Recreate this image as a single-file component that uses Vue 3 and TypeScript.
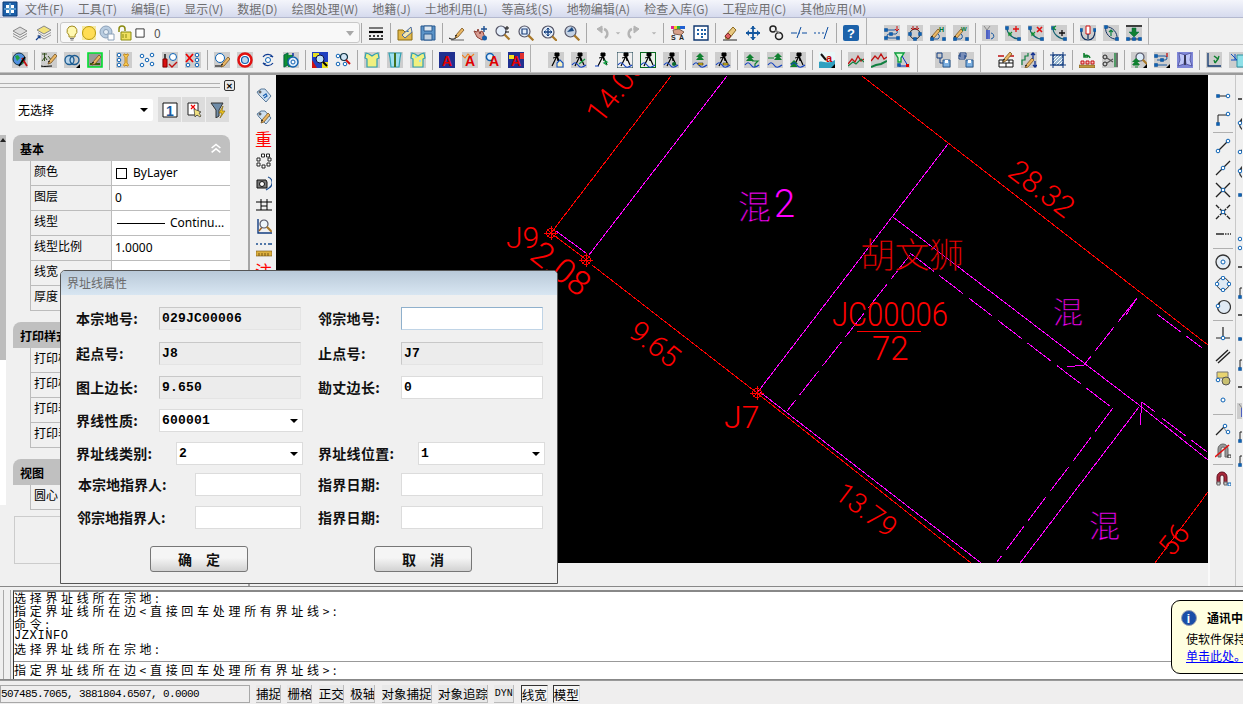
<script setup lang="ts">
import { h } from 'vue'

type Shape = { d?: string; f?: string; s?: string; w?: number; t?: string; x?: number; y?: number; z?: number }
const P = (d: string, f = 'none', s = '#000', w = 1): Shape => ({ d, f, s, w })
const T = (t: string, x: number, y: number, z: number, f = '#000'): Shape => ({ t, x, y, z, f })
const circ = (x: number, y: number, r: number) => `M${x - r} ${y}a${r} ${r} 0 1 0 ${2 * r} 0a${r} ${r} 0 1 0 ${-2 * r} 0`
const tile = P('M0 0h16v16H0z', '#cdcdcd', 'none', 0)
const N = (x: number, y: number, r = 1.8, s = '#0b62b5') => P(circ(x, y, r), '#fff', s, 1)
const Q = (x: number, y: number) => P(`M${x - 1.5} ${y - 1.5}h3v3h-3z`, '#0b62b5', '#0b4a90', 0.5)
const pen = (x: number, y: number) => [P(`M${x} ${y}l6-7 2 2-6 7-3 1z`, '#eab765', '#6a4510', 0.7), P(`M${x} ${y}l-1 1 2 0z`, '#222', '#222', 0.5)]
const lens = (x: number, y: number, r: number, fill = '#e4eefa') => [P(circ(x, y, r), fill, '#556', 1.2), P(`M${x + r * 0.7} ${y + r * 0.7}l5 5`, 'none', '#a8782a', 2.2)]
const tri = [P('M7 1h4v3H7z', '#000', '#000'), P('M9 4 4 14M9 4l1 5M9 4l4 9', 'none', '#000', 1.2), P('M5 6l4-1', 'none', '#000', 1)]
const wave = P('M1 13c2-3 4-3 6 0s4 3 8 0', 'none', '#1040c0', 1.2)
const tree = (x: number, y: number, c = '#108030') => P(`M${x} ${y}l-4 4h2.5l-2.5 3h8l-2.5-3h2.5z`, c, 'none', 0)
const redA = (bg: string) => [P('M0 0h16v16H0z', bg, 'none', 0), T('A', 3, 14, 14, '#e00000')]

const icons: Record<string, Shape[]> = {
  logo: [P('M1 1h14v14H1z', '#1c5fa8', '#0c3c78'), P('M4 4h3v3H4zM9 4h3v3H9zM4 9h3v3H4zM9 9h3v3H9z', '#fff', 'none', 0), P('M8 2v12M2 8h12', 'none', '#8fd0f0', 1)],
  layers: [P('M8 2 15 6 8 10 1 6Z', '#dcdcdc', '#888'), P('M1 8.5l7 4 7-4', 'none', '#888'), P('M1 11l7 4 7-4', 'none', '#999')],
  layers2: [P('M9 1 16 5 9 9 2 5Z', '#f2e27a', '#888'), P('M3 7.5l6 4 7-4M3 10l6 4 7-4', 'none', '#999'), P('M1 15l4-4M2.5 11H5v2.5', 'none', '#14408c', 1.2)],
  bulb: [P('M8 1a5 5 0 0 0-3 9v2h6v-2a5 5 0 0 0-3-9z', '#fff8b0', '#a08a20'), P('M6 13.5h4M6.5 15h3', 'none', '#777')],
  sun: [P('M1 1h14v14H1z', '#f6e9a0', 'none', 0), P(circ(8, 8, 6.5), '#ffdd55', '#b89a10')],
  gear: [P(circ(7, 7, 6), '#b8cce0', '#8aa0b8'), P(circ(7, 7, 2.5), '#e6eef6', '#8aa0b8'), P('M9 9h6v6H9z', '#fff', '#8aa0b8')],
  lock: [P('M3 7V4a3 3 0 0 1 6 0v2', 'none', '#8a8a10', 1.5), P('M5 7h10v8H5z', '#f0e060', '#8a8a10'), P('M7 9v4M10 9v4', 'none', '#8a8a10')],
  blk: [P('M2.5 2.5h11v11h-11z', '#fff', '#000')],
  lines: [P('M1 3h14', 'none', '#000', 1), P('M1 7h14', 'none', '#000', 2.2), P('M1 11h2M5 11h2M9 11h2M13 11h2M1 14h14', 'none', '#000', 1.4)],
  folder: [P('M1 5h5l2 2h7v8H1z', '#e2b84a', '#8a6a10'), P('M5 10 14 2l1 5-7 6z', '#f4e8b0', '#4a6aa0'), P('M9 7l2-2 1 2z', '#3a70b0', 'none', 0)],
  save: [P('M1 1h14v14H1z', '#5b93c7', '#2a5a90'), P('M4 1h8v5H4z', '#dfe8f0', '#2a5a90'), P('M4 9h8v6H4z', '#c0d0e0', '#2a5a90')],
  pline: [P('M0 13c3 2 6 1 8-1', 'none', '#000'), P('M2 15h13', 'none', '#000', 0.6), ...pen(7, 10)],
  hand: [P('M2 6l3 6 5 3 3-2-2-6-2-1-1 3-2-5-1 3z', '#d99c92', '#8c4036'), P('M12 1v6M9 4h6', 'none', '#1c4f90', 1.4), P(circ(12.5, 13, 2.5), '#1c5fa8', 'none', 0)],
  zplus: [...lens(6, 6, 5), P('M12 1v4M10 3h4M10 7h4', 'none', '#111')],
  zwin: [...lens(6.5, 6.5, 5.5), P('M4 4h5v5H4z', 'none', '#1c3f78', 1.2)],
  zpan: [...lens(7, 7, 6), P('M7 3v8M3 7h8', 'none', '#123f80', 1.3), P('M5.5 4.5 7 3l1.5 1.5M5.5 9.5 7 11l1.5-1.5M4.5 5.5 3 7l1.5 1.5M9.5 5.5 11 7 9.5 8.5', 'none', '#123f80')],
  zprev: [...lens(6.5, 6.5, 5.5, '#c4d2e4'), P('M3 7 8 2l2 4z', '#1d4a80', 'none', 0)],
  undo: [P('M11 4a5 5 0 0 1 1 9', 'none', '#b4b4b4', 2.4), P('M10 4H4m0 0 5-3v7z', '#b4b4b4', '#b4b4b4')],
  redo: [P('M5 4a5 5 0 0 0-1 9', 'none', '#b4b4b4', 2.4), P('M6 4h6m0 0-5-3v7z', '#b4b4b4', '#b4b4b4')],
  dd: [P('M5 7h6l-3 3z', '#b4b4b4', 'none', 0)],
  color: [P('M1 1h3v3H1z', '#e02090', 'none', 0), P('M4 1h3v3H4z', '#f0d020', 'none', 0), P('M7 1h3v3H7z', '#20b040', 'none', 0), P('M10 1h5v3h-5z', '#2060d0', 'none', 0), P('M3 5l6-1 5 3-3 3-7-1z', '#d8a088', '#806050'), T('S', 1, 15, 7, '#222'), T('A', 9, 15, 7, '#222')],
  dgrid: [P('M1 1h14v14H1z', '#fff', '#103870', 1.4), P('M4 4h2v2H4zM8 4h2v2H8zM11 4h2v2h-2zM4 8h2v2H4zM8 8h2v2H8zM11 8h2v2h-2zM8 11h2v2H8z', '#1c60a8', 'none', 0)],
  eraser: [P('M1 15h14', 'none', '#222'), P('M3 11 11 2l3 3-7 9H4z', '#e8c880', '#8a6a20'), P('M3 11l3 3 3-3-3-3z', '#e06060', '#803030')],
  move: [P('M8 1v14M1 8h14', 'none', '#1558a0', 1.8), P('M5 4l3-3 3 3zM5 12l3 3 3-3zM4 5 1 8l3 3zM12 5l3 3-3 3z', '#1558a0', 'none', 0)],
  link: [P(circ(5, 4, 3), 'none', '#222', 1.5), P(circ(11, 11, 3.5), 'none', '#222', 1.5), P('M7 6c3 0 4 1 4 3', 'none', '#888', 1.5)],
  br1: [P('M0 8h6M11 8h5', 'none', '#0a4ca0', 1), P('M6 13 10 2', 'none', '#0a4ca0', 1), P('M8 8h1', 'none', '#0a4ca0', 1)],
  br2: [P('M0 8h2M4 8h2M8 8h2', 'none', '#0a4ca0', 1), P('M10 14 14 2', 'none', '#0a4ca0', 1)],
  help: [P('M2 0h12a2 2 0 0 1 2 2v12a2 2 0 0 1-2 2H2a2 2 0 0 1-2-2V2a2 2 0 0 1 2-2z', '#1c62aa', 'none', 0), T('?', 4, 13, 13, '#fff')],
  t1: [tile, P('M2 5h8a2 2 0 0 1 2 4H5a2 2 0 0 0 0 4h8', 'none', '#1858a0'), Q(2, 5), Q(7, 9), Q(2, 13), Q(14, 13), P('M13 1v5M11 4l2 2 2-2', 'none', '#d01010')],
  t2: [tile, P(circ(8, 9, 5), 'none', '#222'), Q(3, 9), Q(13, 9), Q(8, 14), P('M6 1v3M4 3l2 2 2-2M10 1v3M8 3l2 2 2-2', 'none', '#b01010')],
  t3: [tile, ...pen(2, 11), T('H', 9, 7, 7, '#073'), P('M8 9a3 3 0 0 1 0 5H3', 'none', '#1858a0'), Q(2, 14), Q(14, 14)],
  t4: [tile, ...pen(2, 11), T('W', 8, 6, 6, '#073'), P('M8 9a3 3 0 0 1 0 5H3', 'none', '#1858a0'), Q(2, 14), Q(14, 14)],
  t5: [tile, P('M2 1l3 4M8 1 5 5M5 5v9', 'none', '#888'), P('M5 5v9M7 5v9', 'none', '#1030d0', 1.2), P('M9 8a3 3 0 0 1 2 5l-2 1', 'none', '#1858a0')],
  t6: [tile, P('M2 3c0 6 6 11 12 11', 'none', '#106070', 1.2), Q(2, 3), Q(14, 14), P('M11 1v6M8 4h6', 'none', '#e01010', 1.3), P('M7 7 4 10v-3M4 10h3', 'none', '#109030', 1.2)],
  t7: [tile, P('M2 3c0 6 6 11 12 11', 'none', '#106070', 1.2), Q(2, 3), Q(14, 14), P('M9 2l5 5M14 2 9 7', 'none', '#e01010', 1.6), P('M7 7 4 10v-3M4 10h3', 'none', '#109030', 1.2)],
  t8: [tile, P('M2 3c0 6 6 11 12 11', 'none', '#106070', 1.2), Q(2, 3), Q(14, 14), P('M11 5v6M8 8h6', 'none', '#111', 1.3), P('M5 1 2 3l3 2', 'none', '#109030', 1.2)],
  t9: [tile, P('M1 5c0 7 3 10 7 10s7-3 7-10', 'none', '#103060', 1.1), P('M6 1h4v8H6z', '#fff', '#d01010'), P('M8 9v5', 'none', '#103060', 1.2), Q(1, 5), Q(15, 5)],
  t10: [tile, P('M3 2c-2 6 5 13 11 12', 'none', '#103060'), P('M3 2c6-1 12 6 11 12', 'none', '#103060'), Q(3, 2), Q(14, 14), P('M8 5v6M6 7l2-2 2 2', 'none', '#108040', 1.2)],
  t11: [tile, P('M0 1h16', 'none', '#000', 1.4), P('M6 3h4v4h3l-5 5-5-5h3z', '#108030', '#064', 0.5), P('M1 14h14', 'none', '#123', 1), Q(2, 14), Q(8, 14), Q(14, 14)],
  globe: [tile, P(circ(7, 7, 6), '#5090e0', '#134'), P('M3 4l3-1 2 3-3 3zM9 8l3 0-1 4-2-1z', '#20a040', 'none', 0), P('M10 6 15 14', 'none', '#c01010', 1.8), P('M13 5l-6 9', 'none', '#000', 1.6)],
  pencz: [tile, P('M1 2h5M3.5 1v8M1 9l3-4 2 3M7 4l4 5', 'none', '#355020'), ...pen(8, 9), P('M0 14c3 1 7 0 11 0', 'none', '#000')],
  rings: [tile, P(circ(5.5, 8, 4.5), '#b8d4ea', '#1a5a90', 1.3), P(circ(10.5, 8, 4.5), 'none', '#1a5a90', 1.3), P('M16 16h-4l4-4z', '#000', 'none', 0)],
  gbox: [P('M1 1h14v14H1z', '#9a9a9a', '#00e030', 1.6), P('M3 11h10v2H3z', '#3a5a10', 'none', 0), ...pen(6, 10)],
  nbone: [tile, N(3, 3), N(3, 8), N(3, 13), P('M8 2c-1 1 0 2 1 3v6c-1 1-2 2-1 3h1l1-1 1 1h1c1-1 0-2-1-3V5c1-1 2-2 1-3h-1l-1 1-1-1z', '#f6c850', '#c08820')],
  n4: [N(3, 4), N(13, 3), N(3, 13), N(13, 12), N(8, 8)],
  nfix: [tile, N(11, 5, 3.5), P('M3 2v5', 'none', '#222', 1.6), P('M1 7h4v8H1z', '#d81010', '#800'), P('M7 12l3 3 5-5', 'none', '#c01010', 1.4)],
  nx: [tile, P('M1 2l7 8M8 2l-7 8', 'none', '#e00', 1.8), N(12, 3), N(12, 8), N(3, 13), N(12, 13)],
  rpen: [tile, N(6, 6, 4.5), P('M1 14h7', 'none', '#000', 1), ...pen(8, 12)],
  rring: [tile, P(circ(8, 8, 6.5), '#fff', '#e01010', 2.5), P(circ(8, 8, 3.5), '#bcd8f0', '#1060b0', 1.2)],
  cyc: [N(8, 8, 2.5), P('M3 5a6 6 0 0 1 10 0M13 11a6 6 0 0 1-10 0', 'none', '#103c90', 1.2), P('M13 5l-3-1M3 11l3 1', 'none', '#103c90', 1.2)],
  grg: [tile, P('M1 3l4-2v12l-4 2z', '#109030', '#064'), P('M5 3h5v12H5z', '#109030', 'none', 0), P(circ(10, 10, 5), '#dcecfa', '#1060b0', 1.4), P(circ(10, 10, 2), '#fff', '#1060b0'), P('M10 1v3', 'none', '#1030a0', 1.5)],
  mapz: [P('M0 0h16v16H0z', '#2040c0', 'none', 0), P('M1 1h6v4H1zM10 10h6v6h-6z', '#e8e020', 'none', 0), P('M0 8l5 8H0z', '#d01010', 'none', 0), P(circ(8, 7, 4), '#bfe0f5', '#114'), P('M11 10l4 4', 'none', '#000', 2)],
  nz: [N(3, 4), N(3, 12), N(10, 12), P(circ(9, 5, 3.5), '#d0e4f4', '#134', 1.2), P('M11 8l4 4', 'none', '#d01010', 2)],
  sh1: [tile, P('M2 1l3 1 3 2 3-2 3-1 1 5-2 1v8H3V7L1 6z', '#f0f080', '#30a0b0', 1.2)],
  sh2: [tile, P('M2 1h12l-1 5-1 9H4L3 6z', '#a0e0f0', '#30a0b0', 1.2), P('M7 1h2v14H7z', '#407020', 'none', 0)],
  sh3: [tile, P('M2 1l3 1 3 2 3-2 3-1 1 5-2 1v8H3V7L1 6z', '#f0f080', '#30a0b0', 1.2), P('M5 4h2v2H5zM9 8h2v2H9z', '#a0e0f0', 'none', 0)],
  a1: redA('#203090'),
  a2: [tile, P('M0 3l3 3 3-4 3 3 3-3', 'none', '#f08020', 1.1), T('A', 3, 14, 14, '#e00000')],
  a3: [tile, P(circ(5, 5, 3.6), '#e0f0ff', '#1060b0', 1.5), T('A', 4, 14, 14, '#e00000')],
  a4: [P('M0 0h16v16H0z', '#203090', 'none', 0), P('M1 3h5v4H1z', '#f0e020', 'none', 0), P('M12 1h4v6h-4z', '#e03030', 'none', 0), T('A', 3, 14, 14, '#e00000')],
  s1: [tile, ...tri, P('M9 11l3-3 3 3v4H9z', '#f8f0c0', '#1050c0', 1.1)],
  s2: [tile, ...tri, wave, P('M8 12l6-5', 'none', '#10a040', 1.2)],
  s3: [...tri, P('M10 8l3 2-3 1 3 2', 'none', '#10a040', 1.3), P('M1 14h4', 'none', '#1040c0')],
  s4: [P('M0 0h16v16H0z', 'none', '#103848', 1), ...tri, wave],
  s5: [P('M0 0h16v16H0z', '#e8f0e8', '#0a6a20', 2), ...tri, wave],
  s6: [tile, ...tri, wave, P(circ(11, 12, 2), '#0a6a30', 'none', 0)],
  s7: [tile, tree(8, 1), wave, P('M6 11h5v2H6z', '#e8c820', '#000', 0.5)],
  s8: [tile, ...tri, wave, P('M8 11h5v2H8z', '#e8c820', '#000', 0.5)],
  s9: [tile, tree(6, 2), P('M8 9h6l-3 3v3', 'none', '#108030', 1.2), wave],
  s10: [tile, tree(11, 1), wave, P('M1 6h6', 'none', '#108030', 1)],
  s11: [tile, ...tri, tree(4, 8), wave],
  amap: [P('M0 0h16v16H0z', '#e8f8f8', 'none', 0), P('M0 10c4-2 8 3 16-2v8H0z', '#30a0c0', 'none', 0), P('M2 2l5 6', 'none', '#111', 2), T('a', 7, 10, 11, '#c00000'), P('M16 16h-4l4-4z', '#000', 'none', 0)],
  zig1: [tile, P('M0 12l4-5 3 3 3-6 3 5 3-2', 'none', '#c01010', 1.3), P('M0 14l5-4 3 2 5-5 3 3', 'none', '#108040', 1.2)],
  zig2: [tile, P('M0 9l4-5 3 3 3-5 3 5 3-2', 'none', '#c01010', 1.3), P('M0 15l5-2 5-1 6-3', 'none', '#108040', 2)],
  funn: [tile, P('M1 1h9L7 6v4H4V6z', '#d0ffd0', '#10a040', 1.4), P('M8 4l6 10H5', 'none', '#1030c0'), Q(5, 13), P('M12 12h3v3h-3z', '#e00000', 'none', 0)],
  f1: [tile, P('M2 1h5v5H2z', 'none', '#123c80'), P('M5 6v5h3', 'none', '#123c80'), P('M8 8h7v7H8z', '#7db0e0', '#2a5a90'), P('M10 8h3v3h-3z', '#fff', 'none', 0)],
  f2: [tile, P('M2 1h6v4H2zM1 3h6v4H1z', '#dde', '#123c80'), P('M8 8h7v7H8z', '#7db0e0', '#2a5a90'), P('M10 8h3v3h-3z', '#fff', 'none', 0)],
  brick: [P('M1 8h14v7H1z', '#fff', '#111'), P('M1 11h14M5 8v3M11 8v3M8 11v4', 'none', '#111'), P('M0 4h6M10 4h6', 'none', '#c01010', 1.5), ...pen(6, 7)],
  parrows: [tile, P('M1 13V8h3V4h3V1', 'none', '#108040', 1.2), ...pen(5, 13), P('M12 1v6M10 3l2-2 2 2', 'none', '#103090', 1.3), P('M14 9v6M12 13l2 2 2-2', 'none', '#103090', 1.3)],
  hatch: [P('M3 3h10v10H3z', '#9ab8d0', '#123c80'), P('M3 6l3-3M3 9l6-6M3 12l9-9M6 13l7-7M9 13l4-4', 'none', '#fff'), P('M0 3h16M0 13h16M3 0v16M13 0v16', 'none', '#123c80')],
  garr: [P('M2 9h3v3H2zM7 9h3v3H7zM12 9h3v3h-3z', '#fbb', '#c01010'), P('M0 13h16v3H0z', '#c09a40', '#604010', 0.5), P('M11 6a4 4 0 0 0-6-2M5 1v4h4', 'none', '#108030', 1.6)],
  sciss: [tile, P(circ(3, 5, 2), 'none', '#222'), P(circ(3, 12, 2), 'none', '#222'), P('M5 6l6 4M5 11l6-4', 'none', '#555', 1.2), P('M13 1v14', 'none', '#108030', 1.3), P('M15 1v14', 'none', '#111', 1)],
  ztree: [tile, ...lens(9, 5, 4, '#dcecf8'), tree(5, 6), P('M2 13h6M4 15h3', 'none', '#108030'), P('M16 16h-4l4-4z', '#000', 'none', 0)],
  ntree: [tile, P('M2 4h9a2 2 0 0 1 0 4H3', 'none', '#1858a0'), Q(2, 4), Q(8, 8), P('M13 1v4', 'none', '#c01010', 1.3), P('M1 13h12', 'none', '#1858a0'), Q(2, 13), P('M16 16h-4l4-4z', '#000', 'none', 0)],
  bfly: [P('M0 0h16v16H0z', '#8088d8', 'none', 0), P('M8 3 2 1 3 8l-2 6 6-2zM8 3l6-2-1 7 2 6-6-2z', '#c0c8f8', '#404090', 0.7), P('M8 3v10', 'none', '#223', 1.4)],
  axes: [tile, P('M2 1v13h13', 'none', '#103870', 1.3), P('M8 4l4 3-3 4', 'none', '#108030', 1.5), P('M9 11l-1-3M12 7l1-3', 'none', '#108030', 1.3)],
  cube: [tile, P('M8 3h7v12H8z', '#8fe0e8', '#3090a0'), P('M2 2l6 6M2 8h6M6 2v6', 'none', '#1050c0')],
  v1: [P('M1 5 5 2h4l6 7-5 6-7-7z', '#cfe0f0', '#5a7a9a'), P('M7 9l3-2 1 2-3 2', 'none', '#1a60b0', 1.2), P(circ(4, 5, 1), '#fff', '#333')],
  v2: [P('M1 5 5 2h4l6 7-5 6-7-7z', '#cfe0f0', '#5a7a9a'), ...pen(6, 11), P(circ(4, 5, 1), '#fff', '#333')],
  dots: [P('M1 5h3v3H1zM5.5 1h3v3h-3zM10.5 1h3v3h-3zM12 5h3v3h-3zM1 10h3v3H1zM6 12h3v3H6zM11 10h3v3h-3z', '#fff', '#222')],
  cam: [P('M1 5h9l1 2v6H1z', '#7a7a7a', '#111'), P(circ(6, 9, 2.5), '#fff', '#111'), P('M12 2a6 6 0 0 1 1 11l-3 2', 'none', '#1d4f90', 1.2)],
  ruler: [P('M0 5h16M5 2v11M11 2v11M5 9h6M0 13h16', 'none', '#000')],
  axz: [P('M2 0v14h14', 'none', '#123c80', 1.4), P('M3 12l4-5', 'none', '#a06020', 1.4), ...lens(8, 5, 4, '#eef4fa')],
  tape: [P('M0 3h2M4 3h2M8 3h2M12 3h4', 'none', '#1d4f90', 1.6), P('M0 10h16v5H0z', '#dcb040', '#775510', 0.6), P('M3 12v3M6 12v3M9 12v3M12 12v3', 'none', '#775510')],
  x1: [P('M3 8h10', 'none', '#222'), Q(3, 8), N(13, 8)],
  x2: [P('M3 14V5h10', 'none', '#222'), Q(3, 14), N(13, 4)],
  x3: [P('M3 13 13 3', 'none', '#222', 1.2), N(3, 13), N(13, 3)],
  x4: [P('M1 15 15 1', 'none', '#222', 1.2), N(8, 8)],
  x5: [P('M1 1l14 14M15 1 1 15', 'none', '#222', 1.4), N(8, 8)],
  x6: [P('M1 1l14 14M15 1 1 15', 'none', '#222', 1.4), P('M4 4l1 1M11 4l1 1M4 12l1-1M11 12l1-1', 'none', '#f0f0f0', 1.4), N(8, 8)],
  x7: [P('M1 8h8', 'none', '#333', 1.6), P('M10 8h1.5M12.5 8h1.5M15 8h1', 'none', '#333', 1.4)],
  x8: [P(circ(8, 8, 7), '#e4ecf4', '#333', 1.3), N(8, 8, 2)],
  x9: [P(circ(8, 8, 6), '#e0eaf4', '#333'), N(8, 2), N(8, 14), N(2, 8), N(14, 8)],
  x10: [P(circ(9, 9, 6.5), '#e0eaf4', '#333', 1.2), N(3, 8), P('M5 4 4 7', 'none', '#333')],
  x11: [P('M8 1v11M1 12h14', 'none', '#222', 1.2), N(8, 12)],
  x12: [P('M1 13 13 2M3 15 15 4', 'none', '#222', 1.4)],
  x13: [P('M2 2h11v6H2z', '#e8d470', '#777'), P(circ(11, 11, 4), '#c9c070', '#555'), N(3, 10)],
  x14: [N(8, 8, 2)],
  x15: [P('M1 15l8-8', 'none', '#222', 1.2), N(10, 6), N(13, 12), P('M9 8l2 3', 'none', '#888')],
  x16: [P('M3 15V7a5 5 0 0 1 10 0v8h-3V7a2 2 0 0 0-4 0v8z', '#999', '#666'), P('M0 15 14 3', 'none', '#e01010', 1.6), P('M13 13h3v3h-3z', '#fff', '#333')],
  x17: [P('M2 14V7a5 5 0 0 1 10 0v7H9V7a2 2 0 0 0-4 0v7z', '#a8283a', '#601020'), P('M2 12h3v3H2zM9 12h3v3H9z', '#ccc', '#666'), P('M13 13h3v3h-3z', '#fff', '#0b62b5')],
  info: [P(circ(8, 8, 7.5), '#1a4ea8', '#9aa0b0', 1), T('i', 5.8, 13, 12, '#fff')],
  btn1: [P('M1 1h14v14H1z', '#fff', '#111'), T('1', 4, 14, 14, '#1a5a9c')],
  btn2: [P('M2 1h10v12H2z', '#fff', '#222'), P('M5 3l4 4M9 3 5 7', 'none', '#e00', 1.2), P('M8 7l1 8 2-2 3 2 1-1-2-3 2-1z', '#f0e080', '#333', 0.7)],
  btn3: [P('M1 1h12L9 8v6l-3 2V8z', '#6f8ca8', '#333'), P('M13 4 9 11h3l-2 5 5-7h-3z', '#f0c820', '#806000', 0.6)],
  chev: [P('M3 8l5-4 5 4M3 13l5-4 5 4', 'none', '#fff', 1.8)],
}

const Ico = (p: { k: string; z?: number }) =>
  h('svg', { class: 'ico', width: p.z ?? 16, height: p.z ?? 16, viewBox: '0 0 16 16' },
    (icons[p.k] ?? []).map((s) =>
      s.t
        ? h('text', { x: s.x, y: s.y, fill: s.f, 'font-size': s.z, 'font-weight': 700, 'font-family': '"Liberation Sans",sans-serif' }, s.t)
        : h('path', { d: s.d, fill: s.f, stroke: s.s, 'stroke-width': s.w }),
    ),
  )

const menus = ['文件(F)', '工具(T)', '编辑(E)', '显示(V)', '数据(D)', '绘图处理(W)', '地籍(J)', '土地利用(L)', '等高线(S)', '地物编辑(A)', '检查入库(G)', '工程应用(C)', '其他应用(M)']

const bar1: string[][] = [
  ['layers', 'layers2', '|', 'COMBO', '|', 'lines', '|', 'folder', 'save', '|', 'pline', 'hand', 'zplus', 'zwin', 'zpan', 'zprev', '|', 'undo', 'dd', 'redo', 'dd2', '|', 'color', 'dgrid', '|', 'eraser', 'move', 'link', 'br1', 'br2', '|', 'help'],
  ['t1', 't2', 't3', 't4', '|', 't5', 't6', 't7', 't8', '|', 't9', 't10', 't11'],
]
const bar2: string[][] = [
  ['globe', '|', 'pencz', 'rings', 'gbox', '|', 'nbone', 'n4', 'nfix', 'nx', '|', 'rpen', 'rring', 'cyc', 'grg', '|', 'mapz', 'nz', '|', 'sh1', 'sh2', 'sh3', '|', 'a1', 'a2', 'a3', 'a4'],
  ['s1', 's2', 's3', 's4', 's5', 's6', '|', 's7', 's8', '|', 's9', 's10', 's11', '|', 'amap', '|', 'zig1', 'zig2', 'funn'],
  ['f1', 'f2'],
  ['brick', 'parrows', '|', 'hatch', '|', 'garr', 'sciss', '|', 'ztree', 'ntree', 'bfly', '|', 'axes', 'cube'],
]

const leftTools = [
  { k: 'v1' }, { k: 'v2' }, { t: '重' }, { k: 'dots' }, { k: 'cam' }, { k: 'ruler' }, { k: 'axz' }, { k: 'tape' }, { t: '注' },
]

const rightTools = ['x1', 'x2', '|', 'x3', 'x4', 'x5', 'x6', 'x7', '|', 'x8', 'x9', 'x10', '|', 'x11', 'x12', 'x13', 'x14', '|', 'x15', 'x16', '|', 'x17']
const rightTools2 = ['x7', 'x10', 'x3', 'x10', 'x1', 'x14', 'n4', 'x7', 'x2', 'x7', 'x1', 'x2', 'x7', 't5', 'x2', 'x2']

const sections = [
  {
    title: '基本',
    rows: [
      { k: '颜色', v: 'ByLayer', kind: 'color' },
      { k: '图层', v: '0' },
      { k: '线型', v: 'Continu...', kind: 'line' },
      { k: '线型比例', v: '1.0000' },
      { k: '线宽', v: '' },
      { k: '厚度', v: '' },
    ],
  },
  {
    title: '打印样式',
    rows: [
      { k: '打印样式', v: '' },
      { k: '打印样式表', v: '' },
      { k: '打印表附着到', v: '' },
      { k: '打印表类型', v: '' },
    ],
  },
  { title: '视图', rows: [{ k: '圆心 X', v: '' }] },
]

type Cell = { label: string; cls: string; val: string; kind: 'ro' | 'ed' | 'act' | 'cb' }
const rows: { l: Cell; r?: Cell }[] = [
  { l: { label: '本宗地号:', cls: 'w83', val: '029JC00006', kind: 'ro' }, r: { label: '邻宗地号:', cls: 'w83', val: '', kind: 'act' } },
  { l: { label: '起点号:', cls: 'w83', val: 'J8', kind: 'ro' }, r: { label: '止点号:', cls: 'w83', val: 'J7', kind: 'ro' } },
  { l: { label: '图上边长:', cls: 'w83', val: '9.650', kind: 'ro' }, r: { label: '勘丈边长:', cls: 'w83', val: '0', kind: 'ed' } },
  { l: { label: '界线性质:', cls: 'w83', val: '600001', kind: 'cb' } },
  { l: { label: '界址线类别:', cls: 'w100', val: '2', kind: 'cb' }, r: { label: '界址线位置:', cls: 'w100', val: '1', kind: 'cb' } },
  { l: { label: '本宗地指界人:', cls: 'w119 ind', val: '', kind: 'ed' }, r: { label: '指界日期:', cls: 'w83', val: '', kind: 'ed' } },
  { l: { label: '邻宗地指界人:', cls: 'w119 ind2', val: '', kind: 'ed' }, r: { label: '指界日期:', cls: 'w83', val: '', kind: 'ed' } },
]

const statusBtns = [
  { t: '捕捉', c: 'b2' }, { t: '栅格', c: 'b2' }, { t: '正交', c: 'b2' }, { t: '极轴', c: 'b2' },
  { t: '对象捕捉', c: 'b4' }, { t: '对象追踪', c: 'b4' }, { t: 'DYN', c: 'dyn' }, { t: '线宽', c: 'b2 on' }, { t: '模型', c: 'b2 on' },
]

const redLines = [
  'M551 233 671 76', 'M862 76 1208 345', 'M555 236 583 257', 'M592 265 757 393', 'M757 393 971 563', 'M1208 492 1155 563',
]
const magLines = [
  'M589 255 727 76', 'M556 231 586 253', 'M757 393 948 144', 'M893 217 1139 405 1208 460', 'M760 392 981 563', 'M1139 407 1020 563',
  'M1067 367 1084 365', 'M1142 402 1155 412', 'M1142 402 1140 425',
]
const magDash = [
  'M910 253 1111 407', 'M1113 408 997 562', 'M910 255 787 411', 'M1137 298 1084 365', 'M1137 298 1126 315', 'M1157 314 1202 348', 'M1162 418 1207 452',
]
const markers = [[551, 233], [586, 260], [757, 393]]
</script>

<template>
  <div class="app">
    <div class="menubar">
      <Ico k="logo" />
      <div class="menus"><span v-for="m in menus" :key="m">{{ m }}</span></div>
    </div>

    <div class="bar bar1">
      <div v-for="(g, gi) in bar1" :key="gi" class="grp" :class="{ first: gi === 0 }">
        <template v-for="(it, i) in g" :key="i">
          <i v-if="it === '|'" class="sep"></i>
          <div v-else-if="it === 'COMBO'" class="combo">
            <Ico k="bulb" /><Ico k="sun" /><Ico k="gear" /><Ico k="lock" /><Ico k="blk" z="12" />
            <span class="combo-txt">0</span>
            <i class="combo-arrow"></i>
          </div>
          <div v-else-if="it === 'dd'" class="it dd"><Ico k="dd" z="12" /></div>
          <div v-else-if="it === 'dd2'" class="it dd2"><Ico k="dd" z="12" /></div>
          <div v-else class="it"><Ico :k="it" /></div>
        </template>
      </div>
    </div>

    <div class="bar bar2">
      <div v-for="(g, gi) in bar2" :key="gi" class="grp" :class="{ first: gi === 0 }">
        <template v-for="(it, i) in g" :key="i">
          <i v-if="it === '|'" class="sep"></i>
          <div v-else class="it"><Ico :k="it" /></div>
        </template>
      </div>
    </div>

    <div class="main">
      <aside class="panel">
        <div class="grip-row">
          <div class="grip"></div>
          <div class="close">✕</div>
        </div>
        <div class="sel-row">
          <div class="sel"><span>无选择</span><i class="tri"></i></div>
          <div class="sel-btn"><Ico k="btn1" /></div>
          <div class="sel-btn"><Ico k="btn2" /></div>
          <div class="sel-btn"><Ico k="btn3" /></div>
        </div>
        <div class="panel-body">
          <div class="rail"><i class="rail-up"></i><div class="rail-white"></div></div>
          <div class="secs">
            <section v-for="s in sections" :key="s.title" class="sec">
              <header class="sec-h">
                <span>{{ s.title }}</span>
                <Ico v-if="s.title === '基本'" k="chev" z="14" />
              </header>
              <div v-for="r in s.rows" :key="r.k" class="prow">
                <div class="pk">{{ r.k }}</div>
                <div class="pv">
                  <i v-if="r.kind === 'color'" class="swatch"></i>
                  <i v-if="r.kind === 'line'" class="lsample"></i>
                  <span>{{ r.v }}</span>
                </div>
              </div>
            </section>
            <div class="infobox"></div>
          </div>
        </div>
      </aside>

      <div class="vtool">
        <div v-for="(t, i) in leftTools" :key="i" class="vit">
          <b v-if="t.t" class="red">{{ t.t }}</b>
          <Ico v-else :k="t.k as string" />
        </div>
      </div>

      <div class="center">
        <svg class="canvas" width="932" height="488" viewBox="276 75 932 488">
          <g fill="none" stroke-width="1" shape-rendering="crispEdges">
            <path v-for="d in redLines" :key="d" :d="d" stroke="#f00" />
            <path v-for="d in magLines" :key="d" :d="d" stroke="#f0f" />
            <path v-for="d in magDash" :key="d" :d="d" stroke="#f0f" stroke-dasharray="30 7" />
            <path d="M857 331H921" stroke="#f00" />
            <g v-for="m in markers" :key="m[0]" stroke="#f00">
              <circle :cx="m[0]" :cy="m[1]" r="4.5" />
              <path :d="`M${m[0] - 7} ${m[1]}h14M${m[0]} ${m[1] - 7}v14M${m[0] - 3} ${m[1] - 3}l6 6M${m[0] + 3} ${m[1] - 3}l-6 6`" />
            </g>
          </g>
          <g class="cad red-t">
            <text transform="translate(601 125) rotate(-52)" font-size="30">14.05</text>
            <text transform="translate(1006 175) rotate(37)" font-size="30">28.32</text>
            <text transform="translate(627 335) rotate(38)" font-size="29">9.65</text>
            <text transform="translate(833 497) rotate(37)" font-size="28">13.79</text>
            <text transform="translate(528 258) rotate(38)" font-size="34">2.08</text>
            <text x="506" y="248" font-size="30">J9</text>
            <text x="724" y="428" font-size="32">J7</text>
            <text x="872" y="360" font-size="33">72</text>
            <text x="832" y="326" font-size="34" textLength="116" lengthAdjust="spacingAndGlyphs">JC00006</text>
            <text class="cjk" x="860" y="268" font-size="35" textLength="104">胡文狮</text>
            <text transform="translate(1172 558) rotate(-52)" font-size="28">56</text>
          </g>
          <g class="cad mag-t">
            <text class="cjk" x="738" y="219" font-size="33">混</text>
            <text x="774" y="217" font-size="38">2</text>
            <text class="cjk" x="1053" y="323" font-size="30">混</text>
            <text class="cjk" x="1089" y="537" font-size="31">混</text>
          </g>
        </svg>
        <div class="canvas-foot"></div>
      </div>

      <div class="rtool">
        <div class="rcol">
          <template v-for="(k, i) in rightTools" :key="i">
            <i v-if="k === '|'" class="hsep"></i>
            <div v-else class="rit"><Ico :k="k" /></div>
          </template>
        </div>
        <div class="rcol2">
          <div v-for="(k, i) in rightTools2" :key="i" class="rit2"><Ico :k="k" /></div>
        </div>
      </div>
    </div>

    <div class="cmd">
      <div class="cmd-grip"></div>
      <div class="cmd-main">
        <div class="cmd-log">
          <div>选择界址线所在宗地:</div>
          <div>指定界址线所在边&lt;直接回车处理所有界址线&gt;:</div>
          <div>命令:</div>
          <div class="mono">JZXINFO</div>
          <div>选择界址线所在宗地:</div>
        </div>
        <div class="cmd-in">指定界址线所在边&lt;直接回车处理所有界址线&gt;:</div>
      </div>
    </div>

    <div class="status">
      <div class="coords">507485.7065, 3881804.6507, 0.0000</div>
      <div v-for="b in statusBtns" :key="b.t" class="sb" :class="b.c">{{ b.t }}</div>
    </div>

    <div class="balloon">
      <div class="bl-head"><Ico k="info" z="16" /><b>通讯中心</b></div>
      <div class="bl-text">使软件保持最新</div>
      <a class="bl-link">单击此处。</a>
    </div>

    <div class="dialog">
      <div class="dlg-title">界址线属性</div>
      <div class="dlg-grid">
        <div v-for="(r, i) in rows" :key="i" class="drow">
          <div class="dcell">
            <label :class="r.l.cls">{{ r.l.label }}</label>
            <div class="field" :class="r.l.kind">{{ r.l.val }}<i v-if="r.l.kind === 'cb'" class="tri"></i></div>
          </div>
          <div v-if="r.r" class="dcell">
            <label :class="r.r.cls">{{ r.r.label }}</label>
            <div class="field" :class="r.r.kind">{{ r.r.val }}<i v-if="r.r.kind === 'cb'" class="tri"></i></div>
          </div>
        </div>
        <div class="dact">
          <button>确　定</button>
          <button>取　消</button>
        </div>
      </div>
    </div>
  </div>
</template>

<style>
html, body { margin: 0; padding: 0; overflow: hidden; }
svg.ico { display: block; flex: none; }
</style>

<style scoped>
.app {
  width: 1243px; height: 704px; position: relative; overflow: hidden;
  display: flex; flex-direction: column; background: #f0f0f0;
  font-family: "Noto Sans CJK SC", "Noto Sans", sans-serif; font-size: 12px; color: #000;
}
.menubar {
  height: 17px; flex: none; display: flex; align-items: center; padding-left: 2px;
  background: linear-gradient(#f4f5fb, #d6dbee); border-bottom: 1px solid #b4b9cf; color: #6e6e70;
}
.menus { display: flex; gap: 14px; margin-left: 7px; line-height: 16px; white-space: nowrap; }
.bar { display: flex; align-items: center; flex: none; padding-top: 3px; box-sizing: border-box; background: #f0f0f0; }
.bar1 { height: 27px; border-bottom: 1px solid #c4c4c4; }
.bar2 { height: 28px; border-bottom: 1px solid #c0c0c0; }
.grp {
  display: flex; align-items: center; flex: none; padding: 3px 3px 0 12.5px; margin: -3px 1px 0 0; height: 27px;
  border-right: 1px solid #b0b0b0; box-sizing: border-box;
}
.grp.first { padding-left: 8px; }
.it { width: 23px; height: 16px; display: flex; justify-content: center; align-items: center; flex: none; }
.dd { width: 11.5px; }
.dd2 { width: 14px; }
.sep { width: 1px; height: 20px; background: #a8a8a8; margin: 0 2.5px; flex: none; }
.combo {
  width: 300px; height: 21px; box-sizing: border-box; border: 1px solid #c8c8c8; border-radius: 3px; margin: 0 -1.5px 0 -.5px;
  display: flex; align-items: center; gap: 1.5px; padding-left: 3px; background: #f8f8f8; position: relative; flex: none;
}
.combo-txt { margin-left: 7px; color: #555; font-size: 12px; }
.combo-arrow {
  position: absolute; right: 5px; top: 8px; width: 0; height: 0;
  border: 4px solid transparent; border-top: 5px solid #a8a8a8; border-bottom: 0;
}
.main { height: 511px; flex: none; display: flex; border-top: 2px solid #9a9a9a; box-sizing: content-box; }
.panel { width: 246px; flex: none; display: flex; flex-direction: column; overflow: hidden; }
.grip-row { height: 22px; flex: none; position: relative; }
.grip { position: absolute; left: 0; width: 220px; top: 8px; height: 3px; border-top: 1px solid #b0b0b0; border-bottom: 1px solid #b0b0b0; }
.close {
  position: absolute; left: 224px; top: 5px; width: 9px; height: 9px; border: 1px solid #333; border-radius: 2px;
  font-size: 8px; line-height: 9px; text-align: center; font-weight: 700; background: #e8e8e8;
}
.sel-row { display: flex; height: 25px; margin-left: 15px; align-items: center; flex: none; }
.sel {
  width: 138px; height: 22px; background: #fff; margin-right: 5px; border-radius: 2px; display: flex;
  align-items: center; padding-left: 3px; box-sizing: border-box; position: relative; font-size: 12px;
}
.tri { position: absolute; right: 5px; top: 50%; margin-top: -2px; width: 0; height: 0; border: 4px solid transparent; border-top: 4px solid #000; border-bottom: 0; }
.sel-btn { width: 24px; height: 25px; background: #dcdcdc; border-right: 1px solid #f0f0f0; display: flex; align-items: center; justify-content: center; box-sizing: border-box; }
.panel-body { margin-top: 13px; display: flex; flex: 1; min-height: 0; }
.rail { width: 6px; flex: none; background: #bdbdbd; height: 370px; position: relative; }
.rail-white { position: absolute; left: 0; right: 0; top: 225px; height: 145px; background: #fff; }
.rail-up { position: absolute; left: 0; top: 3px; border: 3px solid transparent; border-bottom: 4px solid #222; border-top: 0; }
.secs { margin-left: 7px; width: 217px; }
.sec { margin-bottom: 11px; }
.sec-h {
  height: 26px; background: #c0c0c0; display: flex; align-items: center; justify-content: space-between; padding: 0 7px;
  font-weight: 700; font-size: 12px; border-radius: 8px 8px 0 0; box-sizing: border-box;
}
.prow { height: 25px; margin-left: 17px; display: flex; box-sizing: border-box; border-left: 1px solid #bcbcbc; border-bottom: 1px solid #bcbcbc; }
.pk { width: 81px; flex: none; padding-left: 3px; line-height: 20px; box-sizing: border-box; border-right: 1px solid #bcbcbc; white-space: nowrap; overflow: hidden; }
.pv { flex: 1; background: #fff; padding-left: 3px; line-height: 24px; display: flex; align-items: center; font-family: "Noto Sans", sans-serif; font-size: 12px; white-space: nowrap; }
.swatch { width: 9px; height: 9px; border: 1px solid #000; margin: 0 6px 0 1px; }
.lsample { width: 48px; border-top: 1px solid #000; margin: 0 5px 0 2px; }
.sec:last-of-type { margin-bottom: 6px; }
.infobox { margin-left: 1px; height: 48px; width: 120px; border: 1px solid #ccc; box-sizing: border-box; }
.vtool { width: 30px; flex: none; box-sizing: border-box; border-left: 2px solid #a6a6a6; border-right: 1px solid #888; margin-left: 2px; margin-right: -2px; display: flex; flex-direction: column; align-items: center; padding-top: 9px; overflow: hidden; }
.vit { height: 22px; display: flex; align-items: center; justify-content: center; flex: none; }
.red { color: #f00; font-size: 17px; font-weight: 400; line-height: 22px; }
.center { width: 932px; flex: none; display: flex; flex-direction: column; background: #000; }
.canvas { display: block; background: #000; flex: none; }
.canvas-foot { flex: 1; background: #f0f0f0; }
.cad text { font-family: Roboto, "Liberation Sans", sans-serif; font-weight: 300; }
.cad .cjk { font-family: "Noto Sans CJK SC", sans-serif; font-weight: 300; stroke: #000; stroke-width: .4px; }
.red-t { fill: #f00; }
.mag-t { fill: #f0f; }
.rtool { width: 35px; flex: none; display: flex; overflow: hidden; border-left: 2px solid #fafafa; box-sizing: border-box; }
.rcol { width: 26px; flex: none; border-right: 1px solid #c8c8c8; display: flex; flex-direction: column; align-items: center; padding-top: 10px; box-sizing: border-box; }
.rit { height: 22px; display: flex; align-items: center; flex: none; }
.hsep { width: 20px; height: 1px; background: #b0b0b0; margin: 2.5px 0; flex: none; }
.rcol2 { width: 6px; overflow: hidden; padding-top: 16px; padding-left: 1px; box-sizing: border-box; flex: none; }
.rit2 { height: 24px; }
.cmd { height: 94px; flex: none; display: flex; border-bottom: 1px solid #888; box-sizing: border-box; padding-top: 3px; border-top: 1px solid #888; }
.cmd-grip { width: 6px; margin: 0 2px 0 3px; border-left: 1px solid #aaa; border-right: 1px solid #aaa; flex: none; }
.cmd-main { flex: 1; background: #fff; border-left: 1px solid #333; border-top: 2px solid #888; display: flex; flex-direction: column; }
.cmd-log { height: 71px; border-bottom: 1px solid #999; font-size: 12px; letter-spacing: 3.7px; line-height: 12.8px; box-sizing: border-box; white-space: nowrap; }
.mono { font-family: "Liberation Mono", monospace; font-size: 12px; letter-spacing: .6px; }
.cmd-in { height: 17px; font-size: 12px; letter-spacing: 3.7px; line-height: 16px; white-space: nowrap; }
.status { flex: 1; display: flex; align-items: center; background: #efeeee; padding-top: 3px; border-top: 1px solid #999; }
.coords {
  width: 250px; height: 18px; box-sizing: border-box; border: 1px solid #a8a8a8; margin-right: 6px; flex: none;
  font-family: "Liberation Mono", monospace; font-size: 11px; letter-spacing: -.6px; line-height: 17px;
}
.sb { height: 18px; line-height: 17px; text-align: center; background: #e8e8e8; margin-right: 6.4px; box-sizing: border-box; flex: none; font-size: 12.5px; border-right: 1px solid #bbb; border-bottom: 1px solid #bbb; overflow: hidden; white-space: nowrap; }
.b2 { width: 25px; }
.b4 { width: 50px; }
.dyn { width: 20px; font-family: "Liberation Mono", monospace; font-size: 10px; }
.on { border: 1px solid #333; border-right-color: #ddd; border-bottom-color: #ddd; background: #f4f4f4; width: 27px; margin-right: 5px; }
.balloon {
  position: absolute; left: 1171px; top: 600px; width: 120px; height: 74px; box-sizing: border-box;
  background: #ffffe1; border: 1px solid #000; border-radius: 9px; padding: 8px 0 0 9px; white-space: nowrap;
}
.bl-head { display: flex; align-items: center; gap: 10px; font-size: 12px; }
.bl-text { margin: 4px 0 0 5px; font-size: 12px; line-height: 17px; }
.bl-link { margin-left: 5px; color: #0000ff; text-decoration: underline; font-size: 12px; line-height: 18px; }
.dialog {
  position: absolute; left: 60px; top: 270px; width: 498px; height: 314px; box-sizing: border-box;
  background: #f0f0f0; border: 1px solid #555; border-radius: 5px 5px 0 0;
}
.dlg-title {
  height: 24px; line-height: 24px; padding-left: 6px; font-size: 12px; color: #6a6a6a;
  background: linear-gradient(#b9c9d8, #d8e6f2); border-radius: 4px 4px 0 0;
}
.dlg-grid {
  display: grid; padding: 12px 0 0 15px;
  grid-template-rows: 35px 34px 33px 33px 31px 33px 40px 26px;
}
.drow { display: flex; }
.dcell { width: 227px; margin-right: 15px; display: flex; flex: none; }
.dcell label { flex: none; font-weight: 700; font-size: 14px; line-height: 22px; letter-spacing: .3px; white-space: nowrap; color: #111; }
.w83 { width: 83px; }
.w100 { width: 100px; }
.w119 { width: 119px; box-sizing: border-box; }
.ind { padding-left: 2px; letter-spacing: 0 !important; }
.ind2 { padding-left: 1px; letter-spacing: 0 !important; }
.field {
  flex: 1; height: 23px; box-sizing: border-box; margin-right: 2px; position: relative; white-space: pre;
  font-family: "Liberation Mono", monospace; font-weight: 700; font-size: 13px; line-height: 22px; padding-left: 2px; letter-spacing: .2px;
  background: #fff; border: 1px solid #dcdcdc;
}
.ro { background: #ececec; border-color: #c8c8c8; border-bottom-color: #e4e4e4; border-right-color: #e4e4e4; }
.act { border-color: #8fb0cc #c0d4e6 #c0d4e6 #8fb0cc; }
.cb { margin-right: 0; }
.field .tri { right: 4px; }
.dact { display: flex; padding-left: 74px; gap: 126px; }
.dact button {
  width: 98px; height: 26px; padding: 0; border: 1px solid #777; border-radius: 3px;
  background: linear-gradient(#f5f5f5 0 45%, #d2d2d2); font-family: "Noto Sans CJK SC", sans-serif; font-weight: 700; font-size: 14px; color: #111;
}
</style>
